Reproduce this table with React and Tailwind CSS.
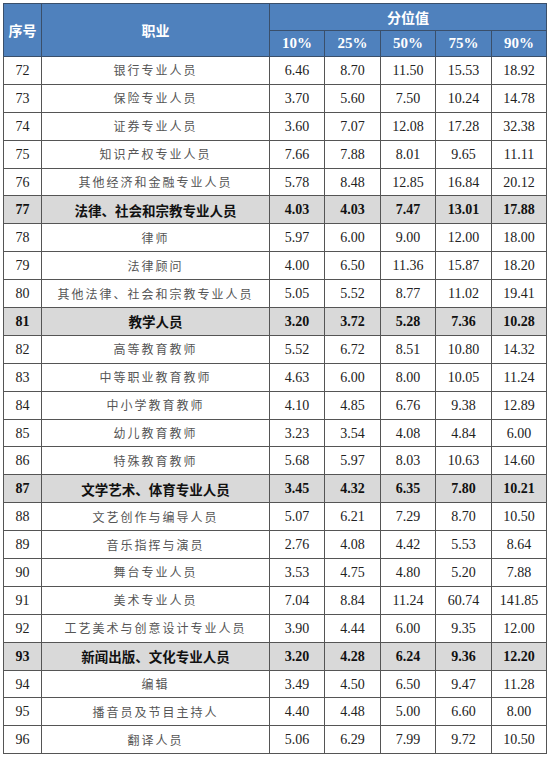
import React from "react";

const rows = [
  ["72", "银行专业人员", "6.46", "8.70", "11.50", "15.53", "18.92"],
  ["73", "保险专业人员", "3.70", "5.60", "7.50", "10.24", "14.78"],
  ["74", "证券专业人员", "3.60", "7.07", "12.08", "17.28", "32.38"],
  ["75", "知识产权专业人员", "7.66", "7.88", "8.01", "9.65", "11.11"],
  ["76", "其他经济和金融专业人员", "5.78", "8.48", "12.85", "16.84", "20.12"],
  ["77", "法律、社会和宗教专业人员", "4.03", "4.03", "7.47", "13.01", "17.88", true],
  ["78", "律师", "5.97", "6.00", "9.00", "12.00", "18.00"],
  ["79", "法律顾问", "4.00", "6.50", "11.36", "15.87", "18.20"],
  ["80", "其他法律、社会和宗教专业人员", "5.05", "5.52", "8.77", "11.02", "19.41"],
  ["81", "教学人员", "3.20", "3.72", "5.28", "7.36", "10.28", true],
  ["82", "高等教育教师", "5.52", "6.72", "8.51", "10.80", "14.32"],
  ["83", "中等职业教育教师", "4.63", "6.00", "8.00", "10.05", "11.24"],
  ["84", "中小学教育教师", "4.10", "4.85", "6.76", "9.38", "12.89"],
  ["85", "幼儿教育教师", "3.23", "3.54", "4.08", "4.84", "6.00"],
  ["86", "特殊教育教师", "5.68", "5.97", "8.03", "10.63", "14.60"],
  ["87", "文学艺术、体育专业人员", "3.45", "4.32", "6.35", "7.80", "10.21", true],
  ["88", "文艺创作与编导人员", "5.07", "6.21", "7.29", "8.70", "10.50"],
  ["89", "音乐指挥与演员", "2.76", "4.08", "4.42", "5.53", "8.64"],
  ["90", "舞台专业人员", "3.53", "4.75", "4.80", "5.20", "7.88"],
  ["91", "美术专业人员", "7.04", "8.84", "11.24", "60.74", "141.85"],
  ["92", "工艺美术与创意设计专业人员", "3.90", "4.44", "6.00", "9.35", "12.00"],
  ["93", "新闻出版、文化专业人员", "3.20", "4.28", "6.24", "9.36", "12.20", true],
  ["94", "编辑", "3.49", "4.50", "6.50", "9.47", "11.28"],
  ["95", "播音员及节目主持人", "4.40", "4.48", "5.00", "6.60", "8.00"],
  ["96", "翻译人员", "5.06", "6.29", "7.99", "9.72", "10.50"],
];

const serif = "font-['Liberation_Serif','Times_New_Roman',serif]";
const cjk = "font-['Noto_Sans_CJK_SC',sans-serif]";

export default function App() {
  return (
    <div className="w-[551px] h-[759px] bg-white pl-[3px] pt-[3px]">
      <table className="w-[544px] table-fixed border-collapse border border-[#4a4a4a]">
        <colgroup>
          <col className="w-[38px]" />
          <col className="w-[228px]" />
          <col className="w-[55px]" />
          <col className="w-[56px]" />
          <col className="w-[55px]" />
          <col className="w-[56px]" />
          <col className="w-[55px]" />
        </colgroup>
        <thead>
          <tr className="h-[27px] bg-[#4f81bd] text-white">
            <th rowSpan={2} className={`border border-[#3a4f6a] ${cjk} text-[14px] font-bold p-0`}>序号</th>
            <th rowSpan={2} className={`border border-[#3a4f6a] ${cjk} text-[14px] font-bold p-0`}>职业</th>
            <th colSpan={5} className={`border border-[#3a4f6a] ${cjk} text-[14px] font-bold p-0`}>分位值</th>
          </tr>
          <tr className="h-[26px] bg-[#4f81bd] text-white">
            {["10%", "25%", "50%", "75%", "90%"].map((p) => (
              <th key={p} className={`border border-[#3a4f6a] ${serif} text-[15px] font-bold p-0`}>{p}</th>
            ))}
          </tr>
        </thead>
        <tbody>
          {rows.map((r) => {
            const bold = r[7];
            return (
              <tr key={r[0]} className={`h-[27.9px] ${bold ? "bg-[#d9d9d9]" : "bg-white"}`}>
                <td className={`border border-[#555] text-center p-0 ${serif} text-[14px] ${bold ? "font-bold text-[#111]" : "text-[#222]"}`}>{r[0]}</td>
                <td className={`border border-[#555] text-center p-0 ${cjk} ${bold ? "font-bold text-[13.5px] text-[#111]" : "text-[12px] tracking-[2px] text-[#555]"}`}>{r[1]}</td>
                {r.slice(2, 7).map((v, i) => (
                  <td key={i} className={`border border-[#555] text-center p-0 ${serif} text-[14px] ${bold ? "font-bold text-[#111]" : "text-[#222]"}`}>{v}</td>
                ))}
              </tr>
            );
          })}
        </tbody>
      </table>
    </div>
  );
}
